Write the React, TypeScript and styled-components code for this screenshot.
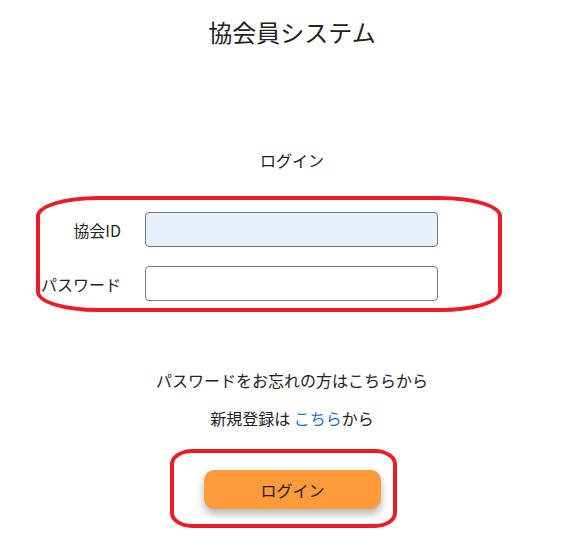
import styled, { createGlobalStyle } from "styled-components";

const GlobalStyle = createGlobalStyle`
    body {
        margin: 0;
        background: #ffffff;
        font-family: "Noto Sans CJK JP", "Noto Sans", sans-serif;
        color: #222222;
    }
`;

const markRed = '#ed1c24';

const App = () => {
    return (
        <Page>
            <GlobalStyle />
            <Title>協会員システム</Title>
            <SubTitle>ログイン</SubTitle>

            <FormBox>
                <FieldRow>
                    <FieldLabel>協会ID</FieldLabel>
                    <TextInput type="text" $filled />
                </FieldRow>
                <FieldRow>
                    <FieldLabel>パスワード</FieldLabel>
                    <TextInput type="password" />
                </FieldRow>
            </FormBox>

            <InfoText style={{ marginTop: '56px' }}>パスワードをお忘れの方はこちらから</InfoText>
            <InfoText style={{ marginTop: '14px' }}>
                新規登録は <LinkText href="#">こちら</LinkText>から
            </InfoText>

            <ButtonBox>
                <LoginButton type="button">ログイン</LoginButton>
            </ButtonBox>
        </Page>
    );
};

const Page = styled.div`
    width: 578px;
    height: 556px;
    display: flex;
    flex-direction: column;
    align-items: stretch;
`;

const Title = styled.h1`
    margin: 0;
    padding-top: 14px;
    font-size: 24px;
    font-weight: 400;
    line-height: 36px;
    text-align: center;
    padding-left: 6px;
`;

const SubTitle = styled.h2`
    margin: 98px 0 0;
    font-size: 16px;
    font-weight: 400;
    line-height: 24px;
    text-align: center;
    padding-left: 6px;
`;

const FormBox = styled.div`
    margin: 24px 0 0 36px;
    width: 466px;
    box-sizing: border-box;
    border: 4px solid ${markRed};
    border-radius: 62px / 20px;
    padding: 12px 0 7px;
    display: flex;
    flex-direction: column;
    gap: 19px;
`;

const FieldRow = styled.div`
    display: grid;
    grid-template-columns: 81px 293px;
    column-gap: 24px;
    align-items: center;
`;

const FieldLabel = styled.label`
    font-size: 16px;
    text-align: right;
    white-space: nowrap;
    line-height: 24px;
`;

const TextInput = styled.input<{ $filled?: boolean }>`
    box-sizing: border-box;
    height: 35px;
    width: 293px;
    margin: 0;
    border: 1px solid #767676;
    border-radius: 4px;
    background: ${(p) => (p.$filled ? '#e8f0fe' : '#ffffff')};
    font-size: 16px;
    padding: 0 8px;
    outline: none;
`;

const InfoText = styled.p`
    margin: 0;
    font-size: 16px;
    line-height: 24px;
    text-align: center;
    padding-left: 6px;
`;

const LinkText = styled.a`
    color: #1f74c4;
    text-decoration: none;
`;

const ButtonBox = styled.div`
    margin: 19px 0 0 170px;
    width: 227px;
    height: 79px;
    box-sizing: border-box;
    border: 4px solid ${markRed};
    border-radius: 22px / 15px;
    padding: 17px 0 0 30px;
`;

const LoginButton = styled.button`
    width: 177px;
    height: 39px;
    border: none;
    border-radius: 10px;
    background: #ff9a3a;
    color: #222222;
    font-family: "Noto Sans CJK JP", "Noto Sans", sans-serif;
    font-size: 16px;
    box-shadow: 0 5px 8px rgba(0, 0, 0, 0.3);
    cursor: pointer;
`;

export default App;
